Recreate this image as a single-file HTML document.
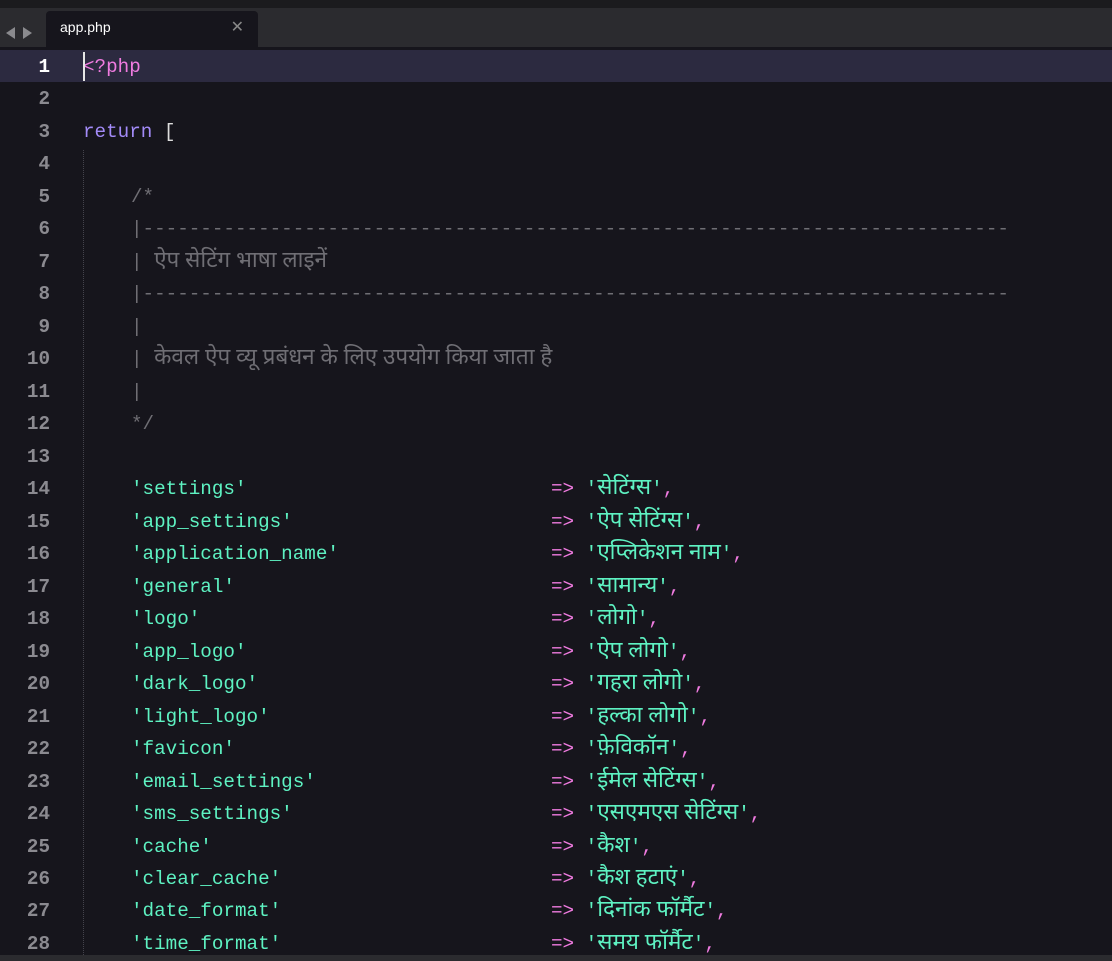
<!DOCTYPE html>
<html><head><meta charset="utf-8"><style>
body{margin:0;width:1112px;height:961px;background:#16151c;overflow:hidden;position:relative;font-family:"Liberation Mono",monospace;font-size:19.25px}
.top{position:absolute;left:0;top:0;width:1112px;height:8px;background:#1b1b1e}
.tabbar{position:absolute;left:0;top:8px;width:1112px;height:39px;background:#2b2b2f}
.tab{position:absolute;left:46px;top:3px;width:212px;height:39px;background:#16151c;border-radius:4px 4px 0 0}
.tab span{position:absolute;left:14px;top:8px;font:14px "Liberation Sans",sans-serif;color:#fff}
.tab b{position:absolute;right:14px;top:6px;font:16px "Liberation Sans",sans-serif;color:#888}
.arr{position:absolute;top:19px;width:0;height:0;border-top:6px solid transparent;border-bottom:6px solid transparent}
.hl{position:absolute;left:0;top:50px;width:1112px;height:32px;background:#2c2a40}
.cur{position:absolute;left:83px;top:52px;width:2px;height:29px;background:#e6e6e6}
.guide{position:absolute;left:83px;top:150px;height:805px;border-left:1px dotted #44434c}
.ln{position:absolute;left:0;width:50px;text-align:right;color:#8b8a90;font-weight:bold}
.c{position:absolute;white-space:pre;line-height:32px}
.ln{line-height:32px}
.s{color:#5ef2c2}.o{color:#f07be0}.k{color:#a38bf8}.cm{color:#6f6e74}
.d{font-family:"Noto Sans Devanagari","Lohit Devanagari",sans-serif;font-size:22.5px}
.bot{position:absolute;left:0;top:955px;width:1112px;height:6px;background:#2b2b2f}
</style></head><body>
<div class="top"></div>
<div class="tabbar"><div class="arr" style="left:6px;border-right:9px solid #8a8a8e"></div><div class="arr" style="left:23px;border-left:9px solid #8a8a8e"></div>
<div class="tab"><span>app.php</span><b>✕</b></div></div>
<div class="hl"></div>
<div class="guide"></div>
<div id="g"></div>
<div class="cur"></div>
<div class="bot"></div>
<script>
var D='|'+'-'.repeat(75);
var L=[
['<span class="o">&lt;?php</span>',83],
['',83],
['<span class="k">return</span> <span style="color:#ddd">[</span>',83],
['',83],
['<span class="cm">/*</span>',131],
['<span class="cm">'+D+'</span>',131],
['<span class="cm">| <span class="d">ऐप सेटिंग भाषा लाइनें</span></span>',131],
['<span class="cm">'+D+'</span>',131],
['<span class="cm">|</span>',131],
['<span class="cm">| <span class="d">केवल ऐप व्यू प्रबंधन के लिए उपयोग किया जाता है</span></span>',131],
['<span class="cm">|</span>',131],
['<span class="cm">*/</span>',131],
['',131]];
var P=[['settings','सेटिंग्स'],['app_settings','ऐप सेटिंग्स'],['application_name','एप्लिकेशन नाम'],['general','सामान्य'],['logo','लोगो'],['app_logo','ऐप लोगो'],['dark_logo','गहरा लोगो'],['light_logo','हल्का लोगो'],['favicon','फ़ेविकॉन'],['email_settings','ईमेल सेटिंग्स'],['sms_settings','एसएमएस सेटिंग्स'],['cache','कैश'],['clear_cache','कैश हटाएं'],['date_format','दिनांक फॉर्मैट'],['time_format','समय फॉर्मैट']];
var h='';
for(var i=0;i<28;i++){var y=51+i*32.48;
h+='<div class="ln" style="top:'+y+'px;'+(i==0?'color:#fff':'')+'">'+(i+1)+'</div>';
if(i<13){h+='<div class="c" style="top:'+y+'px;left:'+L[i][1]+'px">'+L[i][0]+'</div>';}
else{var p=P[i-13];h+='<div class="c s" style="top:'+y+'px;left:131px">\''+p[0]+'\'</div><div class="c" style="top:'+y+'px;left:551px"><span class="o">=&gt;</span> <span class="s">\'<span class="d">'+p[1]+'</span>\'</span><span class="o">,</span></div>';}}
document.getElementById('g').innerHTML=h;
</script>
</body></html>
